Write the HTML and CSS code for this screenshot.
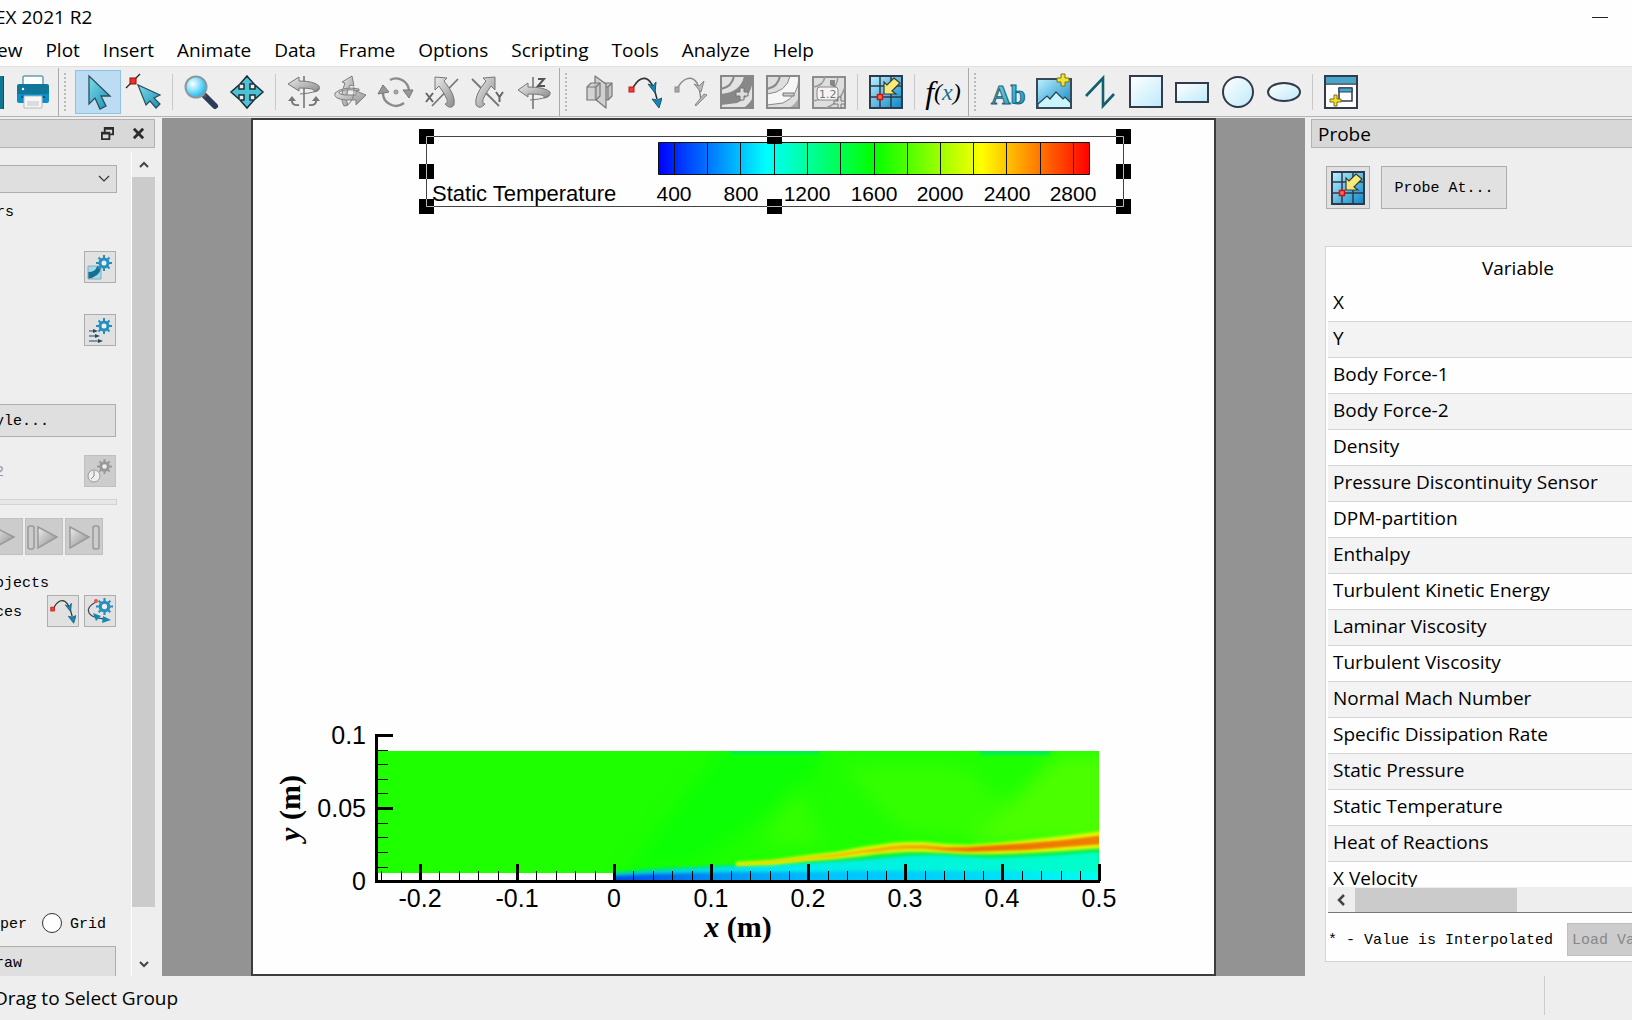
FILE: index.html
```html
<!DOCTYPE html>
<html lang="en">
<head>
    <meta charset="UTF-8">
    <meta name="viewport" content="width=device-width, initial-scale=1.0">
    <title>EX 2021 R2</title>
    <link rel="stylesheet" href="styles.css">
</head>
<body>

    <!-- shared gradients and icons -->
    <svg class="defs" width="0" height="0" aria-hidden="true">
        <defs>
            <linearGradient id="teal" x1="0" y1="0" x2="1" y2="1">
                <stop offset="0" stop-color="#7fdcea"/>
                <stop offset="1" stop-color="#1a8fb4"/>
            </linearGradient>
            <linearGradient id="cyan" x1="0" y1="0" x2="1" y2="1">
                <stop offset="0" stop-color="#bdf1ff"/>
                <stop offset="1" stop-color="#0a86c4"/>
            </linearGradient>
            <linearGradient id="pale" x1="0" y1="0" x2="1" y2="1">
                <stop offset="0" stop-color="#ffffff"/>
                <stop offset="1" stop-color="#bdeafa"/>
            </linearGradient>
            <linearGradient id="grey" x1="0" y1="0" x2="1" y2="1">
                <stop offset="0" stop-color="#ececec"/>
                <stop offset="1" stop-color="#8c8c8c"/>
            </linearGradient>
            <symbol id="probe" viewBox="0 0 34 34">
                <rect x="1" y="1" width="32" height="32" fill="url(#cyan)" stroke="#2b3a4c" stroke-width="2"/>
                <path d="M11 1v32M22 1v32M1 11h32M1 22h32" stroke="#2b3a4c" stroke-width="1.500"/>
                <rect x="8.500" y="19.500" width="5" height="5" fill="#ff6a50" stroke="#d01010" stroke-width="1.500"/>
                <path d="M25 3l6 5-8 8 4 3H15V7l3 3z" fill="#f6ea7a" stroke="#3a3a30" stroke-width="1.200"/>
            </symbol>
            <symbol id="stream" viewBox="0 0 34 34">
                <path d="M4 15C9 4 17 -1 23 8C25 11 27 16 29 24" fill="none" stroke="#333" stroke-width="1.600"/>
                <rect x="1" y="12" width="5" height="5" fill="#f04030" stroke="#c01818"/>
                <path d="M20 9l5 2 3-4-1 11zM24 24l5 1 5-2-3 10z" fill="#1688b0" stroke="#17587a"/>
            </symbol>
            <symbol id="gear" viewBox="0 0 16 16">
                <path d="M8 0v16M0 8h16M2.500 2.500l11 11M13.500 2.500l-11 11" stroke="currentColor" stroke-width="2"/>
                <circle cx="8" cy="8" r="4" fill="#eee" stroke="currentColor" stroke-width="3"/>
            </symbol>
        </defs>
    </svg>

    <header class="titlebar">
        <h1>EX 2021 R2</h1>
        <button class="minimize" aria-label="Minimize"></button>
    </header>

    <nav class="menu">
        <button>ew</button>
        <button>Plot</button>
        <button>Insert</button>
        <button>Animate</button>
        <button>Data</button>
        <button>Frame</button>
        <button>Options</button>
        <button>Scripting</button>
        <button>Tools</button>
        <button>Analyze</button>
        <button>Help</button>
    </nav>

    <div class="toolbars">
        <div class="toolbar first">
            <span class="cut-icon"></span>
            <button aria-label="Print">
                <svg viewBox="0 0 34 34">
                    <path d="M7 2q0-1 1-1h18q1 0 1 1v10H7z" fill="#fff" stroke="#19708f"/>
                    <path d="M3 9h28q2 0 2 2v11H1V11q0-2 2-2z" fill="#10769c"/>
                    <path d="M1 19h32v7q0 2-2 2H3q-2 0-2-2z" fill="#0a8fca"/>
                    <path d="M5 22h24" stroke="#0c5878" stroke-width="2"/>
                    <path d="M8 21h18v12H8z" fill="#f6f6f6" stroke="#b9b9b9"/>
                    <path d="M11 26h12v5H11z" fill="#dcdcdc"/>
                    <circle cx="7" cy="14" r="1.200" fill="#fff"/>
                </svg>
            </button>
        </div>

        <div class="toolbar">
            <span class="grip"></span>
            <button class="active" aria-label="Select">
                <svg viewBox="0 0 34 34"><path d="M8 1v28l6-6 5 11 6-3-5-10h9z" fill="url(#teal)" stroke="#27505c" stroke-width="1.300"/></svg>
            </button>
            <button aria-label="Adjust">
                <svg viewBox="0 0 34 34">
                    <path d="M-1 13L13 -1" stroke="#222" stroke-width="1.200"/>
                    <rect x="3" y="3" width="6" height="6" fill="#f03020" stroke="#901010"/>
                    <path d="M11 10l8 20 4-4 6 7 4-4-6-6 6-3z" fill="url(#teal)" stroke="#27505c" stroke-width="1.200"/>
                </svg>
            </button>
            <span class="sep"></span>
            <button aria-label="Zoom">
                <svg viewBox="0 0 34 34">
                    <path d="M21 21l10 10" stroke="#2d3b58" stroke-width="6" stroke-linecap="round"/>
                    <path d="M18 18l4 4" stroke="#555" stroke-width="3"/>
                    <circle cx="12" cy="12" r="10.500" fill="url(#zoomlens)" stroke="#8b9aa0" stroke-width="2"/>
                    <defs><radialGradient id="zoomlens" cx=".35" cy=".35" r=".7"><stop offset="0" stop-color="#fff"/><stop offset=".45" stop-color="#8fe2fa"/><stop offset="1" stop-color="#13b3ea"/></radialGradient></defs>
                </svg>
            </button>
            <button aria-label="Translate">
                <svg viewBox="0 0 34 34"><path d="M17 1l7 8h-4v5h5v-4l8 7-8 7v-4h-5v5h4l-7 8-7-8h4v-5H9v4l-8-7 8-7v4h5V9h-4z" fill="#4cc3d4" stroke="#1d3038" stroke-width="1.500"/></svg>
            </button>
            <span class="sep"></span>
            <button disabled aria-label="Rotate spherical">
                <svg viewBox="0 0 34 34">
                    <path d="M17 1v32" stroke="#777" stroke-width="1.600"/>
                    <path d="M1 9l11-7v4q15 0 20 5q2 5-5 6q3-4-15-4v3z" fill="url(#grey)" stroke="#777"/>
                    <path d="M32 13q-2 5-19 6" fill="none" stroke="#777"/>
                    <path d="M12 30q-8 1-7-6M22 30q8 1 7-6" fill="none" stroke="#777" stroke-width="2"/>
                    <path d="M1 26l4-5 4 5zM25 26l4-5 4 5z" fill="#777"/>
                </svg>
            </button>
            <button disabled aria-label="Rotate rollerball">
                <svg viewBox="0 0 34 34" stroke="#808080" stroke-linejoin="round">
                    <path d="M11 31q-5-8 1-23l-3-1 10-6 2 10-4-1q-6 13-2 20z" fill="url(#grey)"/>
                    <path d="M26 14Q10 11 2 18q-2 6 11 7h10v5l10-10-10-4v4H12q-7-1-6-3 6-4 20-1z" fill="url(#grey)"/>
                    <path d="M21 12q1 14-8 19" fill="none"/>
                </svg>
            </button>
            <button disabled aria-label="Rotate twist">
                <svg viewBox="0 0 34 34">
                    <path d="M4 17A13 13 0 0 0 25 28M11 5A13 13 0 0 1 30 16" fill="none" stroke="#8a8a8a" stroke-width="2.400"/>
                    <path d="M-1 19l5-9 6 7zM24 15l10 0-4 8z" fill="#999" stroke="#777"/>
                    <circle cx="17" cy="17" r="2" fill="#aaa" stroke="#888"/>
                </svg>
            </button>
            <button disabled aria-label="Rotate about X">
                <svg viewBox="0 0 34 34">
                    <path d="M7 31L33 4" stroke="#777" stroke-width="1.800"/>
                    <path d="M10 2l12 1-3 3q12 14 10 24q-4 5-9-1q7 0-6-18l-4 4z" fill="url(#grey)" stroke="#777"/>
                    <path d="M1 18l7 9M8 18l-7 9" stroke="#666" stroke-width="2"/>
                </svg>
            </button>
            <button disabled aria-label="Rotate about Y">
                <svg viewBox="0 0 34 34">
                    <path d="M1 4l27 27" stroke="#777" stroke-width="1.800"/>
                    <path d="M24 2l-12 1 3 3Q3 20 5 30q4 5 9-1q-7 0 6-18l4 4z" fill="url(#grey)" stroke="#777"/>
                    <path d="M25 17l3.500 5 3.500-5M28.500 22v5" fill="none" stroke="#666" stroke-width="2"/>
                </svg>
            </button>
            <button disabled aria-label="Rotate about Z">
                <svg viewBox="0 0 34 34">
                    <path d="M16 2v32" stroke="#777" stroke-width="1.600"/>
                    <path d="M1 15l10-7v4q17 0 22 5q1 5-6 6q3-4-16-4v3z" fill="url(#grey)" stroke="#777"/>
                    <path d="M32 20q-3 4-19 5" fill="none" stroke="#777"/>
                    <path d="M21 4h6l-6 7h7" fill="none" stroke="#555" stroke-width="2"/>
                </svg>
            </button>
        </div>

        <div class="toolbar">
            <span class="grip"></span>
            <button disabled aria-label="Slice">
                <svg viewBox="0 0 34 34" fill="#c8c8c8" stroke="#777" stroke-width="1.200" stroke-linejoin="round">
                    <path d="M17 12l4-4h9v13l-4 4h-9z"/><path d="M17 12h9v13M26 12l4-4" fill="none"/>
                    <path d="M13 1l11 8v24l-11-9z" fill="#d0d0d0"/>
                    <path d="M5 12l4-4h9v13l-4 4H5z" fill-opacity=".7"/><path d="M5 12h9v13M14 12l4-4" fill="none"/>
                </svg>
            </button>
            <button aria-label="Streamtrace"><svg><use href="#stream"/></svg></button>
            <button disabled aria-label="Streamtrace termination line">
                <svg viewBox="0 0 34 34">
                    <path d="M3 14C8 4 17-1 23 8q3 6 4 18" fill="none" stroke="#8a8a8a" stroke-width="1.500"/>
                    <rect x="1" y="12" width="4" height="5" fill="#aaa" stroke="#888"/>
                    <path d="M20 9l5 2 5-5-3 11zM22 31l11-11-3-1-9 11z" fill="#bbb" stroke="#888"/>
                </svg>
            </button>
            <button disabled aria-label="Add contour level">
                <svg viewBox="0 0 34 34">
                    <path d="M1 1h32v32H1z" fill="#e2e2e2"/>
                    <path d="M24 1h9q0 20-16 27L1 30V19Q21 17 24 1zM33 22v11H23q7-4 10-11z" fill="#888"/>
                    <path d="M1 1h32v32H1zM14 1Q12 12 1 14" fill="none" stroke="#888" stroke-width="2"/>
                    <path d="M20 13h4v4h4v4h-4v4h-4v-4h-4v-4h4z" fill="#ddd" stroke="#777"/>
                </svg>
            </button>
            <button disabled aria-label="Delete contour level">
                <svg viewBox="0 0 34 34">
                    <path d="M1 1h32v32H1z" fill="#dedede"/>
                    <path d="M24 1h9q0 20-16 27L1 30V19Q21 17 24 1z" fill="#f6f6f6" stroke="#888"/>
                    <path d="M33 22v11H23q7-4 10-11z" fill="#aaa"/>
                    <path d="M1 1h32v32H1zM14 1Q12 12 1 14" fill="none" stroke="#888" stroke-width="2"/>
                    <path d="M17 18h11v3H17z" fill="#ccc" stroke="#777"/>
                </svg>
            </button>
            <button disabled aria-label="Add contour label">
                <svg viewBox="0 0 34 34">
                    <path d="M1 2h32v31H1z" fill="#dedede" stroke="#8c8c8c" stroke-width="2"/>
                    <path d="M13 2Q11 11 1 12M26 2Q23 23 1 26M33 12Q28 28 14 33" fill="none" stroke="#999" stroke-width="1.500"/>
                    <path d="M18 5h5v8l-5-3z" fill="#888"/>
                    <rect x="5" y="12" width="21" height="13" rx="3" fill="#f4f4f4" stroke="#888"/>
                    <path d="M26 22h3v4h4v3h-4v4h-3v-4h-4v-3h4z" fill="#ddd" stroke="#777"/>
                    <text x="7" y="23" class="icon-number">1.2</text>
                </svg>
            </button>
            <span class="sep"></span>
            <button aria-label="Probe"><svg><use href="#probe"/></svg></button>
            <span class="sep"></span>
            <button class="fx" aria-label="Specify equations">f<span>(<b>x</b>)</span></button>
        </div>

        <div class="toolbar last">
            <span class="grip"></span>
            <button aria-label="Text">
                <svg viewBox="0 0 34 34"><text x="0" y="29" class="icon-ab" fill="url(#teal)">Ab</text></svg>
            </button>
            <button aria-label="Image">
                <svg viewBox="0 0 34 34">
                    <path d="M0 4h34v29H0z" fill="url(#cyan)"/>
                    <path d="M1 29l9-8 3 3 6-7 7 7 2-2 6 6v5H1z" fill="#c8f4fd" stroke="#2b4454" stroke-width="1.200"/>
                    <path d="M0 4h34v29H0z" fill="none" stroke="#36495a" stroke-width="2"/>
                    <path d="M24 -1h4v4h4v4h-4v4h-4V7h-4V3h4z" fill="#f4e230" stroke="#77701c"/>
                </svg>
            </button>
            <button aria-label="Polyline">
                <svg viewBox="0 0 34 34"><path d="M3 21L20 3v28l11-12" fill="none" stroke="#12606e" stroke-width="2.600"/></svg>
            </button>
            <button aria-label="Square">
                <svg viewBox="0 0 34 34"><path d="M1 1h32v31H1z" fill="url(#pale)" stroke="#333a4c" stroke-width="2"/></svg>
            </button>
            <button aria-label="Rectangle">
                <svg viewBox="0 0 34 34"><path d="M1 8h32v19H1z" fill="url(#pale)" stroke="#333a4c" stroke-width="2"/></svg>
            </button>
            <button aria-label="Circle">
                <svg viewBox="0 0 34 34"><circle cx="17" cy="17" r="15" fill="url(#pale)" stroke="#333a4c" stroke-width="2"/></svg>
            </button>
            <button aria-label="Ellipse">
                <svg viewBox="0 0 34 34"><ellipse cx="17" cy="17" rx="16" ry="9" fill="url(#pale)" stroke="#333a4c" stroke-width="2"/></svg>
            </button>
            <span class="sep"></span>
            <button aria-label="Create frame">
                <svg viewBox="0 0 34 34">
                    <path d="M1 1h32v32H1z" fill="#fff" stroke="#333a4c" stroke-width="2"/>
                    <path d="M2 2h30v6H2z" fill="#43a8cc"/><path d="M1 9h32" stroke="#333a4c" stroke-width="1.500"/>
                    <path d="M15 13h13v13H15z" fill="#fff" stroke="#333a4c" stroke-width="1.500"/>
                    <path d="M15 13h13v4H15z" fill="#43a8cc" stroke="#333a4c"/>
                    <path d="M10 20h3v4h4v3h-4v4h-3v-4H6v-3h4z" fill="#f4e230" stroke="#77701c"/>
                </svg>
            </button>
        </div>
    </div>

    <main>
        <aside class="sidebar">
            <div class="dock-title">
                <button aria-label="Float">
                    <svg viewBox="0 0 14 14"><path d="M4 5V1h9v7H9M4 2h9M1 6h8v7H1zM1 7h8" fill="none" stroke="#2c2c2c" stroke-width="2"/></svg>
                </button>
                <button aria-label="Close">
                    <svg viewBox="0 0 14 14"><path d="M2 2l10 10M12 2L2 12" stroke="#2c2c2c" stroke-width="3"/></svg>
                </button>
            </div>
            <div class="sidebar-body">
                <div class="options">
                    <div class="combo">
                        <select aria-label="Plot type"><option></option></select>
                        <svg viewBox="0 0 12 8"><path d="M1 1l5 5 5-5" fill="none" stroke="#333" stroke-width="1.200"/></svg>
                    </div>
                    <p class="layers">rs</p>
                    <button class="small contour" aria-label="Contour details">
                        <svg viewBox="0 0 26 26">
                            <path d="M1 12h13v13H1z" fill="#9edcea"/>
                            <path d="M1 25v-7q8 0 9-6h4q0 6-4 9t-9 4z" fill="#146f92"/>
                            <path d="M1 12h13v13H1z" fill="none" stroke="#8ab"/>
                            <use href="#gear" x="9" y="1" width="16" height="16" color="#2590bd"/>
                        </svg>
                    </button>
                    <button class="small vector" aria-label="Vector details">
                        <svg viewBox="0 0 26 26">
                            <path d="M2 14h6M2 19h8M2 24h10" stroke="#234d5c" stroke-width="1.200"/>
                            <path d="M6 12l5 2-5 2zM8 17l5 2-5 2zM11 22l5 2-5 2z" fill="#234d5c"/>
                            <use href="#gear" x="9" y="1" width="16" height="16" color="#2590bd"/>
                        </svg>
                    </button>
                    <button class="wide style">yle...</button>
                    <div class="row time">
                        <span>2</span>
                        <button class="small" disabled aria-label="Time details">
                            <svg viewBox="0 0 26 26">
                                <use href="#gear" x="10" y="1" width="15" height="15" color="#999"/>
                                <circle cx="7" cy="18" r="6" fill="#eee" stroke="#999"/>
                                <path d="M7 13v5l-3 3" fill="none" stroke="#888"/>
                            </svg>
                        </button>
                    </div>
                    <input class="slider" type="range" disabled aria-label="Time">
                    <div class="player">
                        <button disabled aria-label="Play"><svg viewBox="0 0 36 36"><path d="M8 8l20 10L8 29z" fill="url(#grey)" stroke="#999" stroke-width="1.500"/></svg></button>
                        <button disabled aria-label="Step forward"><svg viewBox="0 0 36 36"><rect x="2" y="7" width="6" height="23" rx="2" fill="none" stroke="#999" stroke-width="1.500"/><path d="M12 8l19 10-19 11z" fill="url(#grey)" stroke="#999" stroke-width="1.500"/></svg></button>
                        <button disabled aria-label="Go to end"><svg viewBox="0 0 36 36"><path d="M4 8l19 10L4 29z" fill="url(#grey)" stroke="#999" stroke-width="1.500"/><rect x="27" y="7" width="6" height="23" rx="2" fill="none" stroke="#999" stroke-width="1.500"/></svg></button>
                    </div>
                    <p class="derived">bjects</p>
                    <div class="row">
                        <span>ces</span>
                        <button class="small" aria-label="Place streamtrace"><svg><use href="#stream"/></svg></button>
                        <button class="small" aria-label="Streamtrace details">
                            <svg viewBox="0 0 26 26">
                                <path d="M9 4Q-1 9 2 15q3 5 16 6" fill="none" stroke="#445" stroke-width="1.300"/>
                                <path d="M6 15l8 3-5 5zM16 18l8 4-9 3z" fill="#1688b0"/>
                                <circle cx="9" cy="3" r="2" fill="#f05050"/>
                                <use href="#gear" x="9" y="0" width="17" height="17" color="#2590bd"/>
                            </svg>
                        </button>
                    </div>
                    <div class="snap">
                        <span>per</span>
                        <input type="radio" id="grid" name="snap">
                        <label for="grid">Grid</label>
                    </div>
                    <button class="wide redraw">raw</button>
                </div>
                <div class="scrollbar">
                    <svg viewBox="0 0 12 8"><path d="M2 6l4-4 4 4" fill="none" stroke="#444" stroke-width="2"/></svg>
                    <div class="thumb"></div>
                    <svg viewBox="0 0 12 8"><path d="M2 2l4 4 4-4" fill="none" stroke="#444" stroke-width="2"/></svg>
                </div>
            </div>
        </aside>

        <section class="workspace">
            <svg class="plot" viewBox="253 120 961 854">
                <defs>
                    <linearGradient id="legend">
                        <stop offset="0" stop-color="#0000ff"/>
                        <stop offset=".25" stop-color="#00ffff"/>
                        <stop offset=".5" stop-color="#00ff00"/>
                        <stop offset=".75" stop-color="#ffff00"/>
                        <stop offset="1" stop-color="#ff0000"/>
                    </linearGradient>
                    <linearGradient id="fuel">
                        <stop offset="0" stop-color="#0048f0"/>
                        <stop offset=".1" stop-color="#0068f4"/>
                        <stop offset=".22" stop-color="#0094f6"/>
                        <stop offset=".45" stop-color="#00c4ff"/>
                        <stop offset=".7" stop-color="#00d4f8"/>
                        <stop offset="1" stop-color="#00fff0"/>
                    </linearGradient>
                    <linearGradient id="mix">
                        <stop offset="0" stop-color="#00c8c8"/>
                        <stop offset=".3" stop-color="#00e8f0"/>
                        <stop offset="1" stop-color="#00ffc8"/>
                    </linearGradient>
                    <linearGradient id="flame">
                        <stop offset="0" stop-color="#e8d800"/>
                        <stop offset=".5" stop-color="#f0a800"/>
                        <stop offset=".65" stop-color="#ee7000"/>
                        <stop offset="1" stop-color="#f08000"/>
                    </linearGradient>
                    <filter id="soft" x="-20%" y="-20%" width="140%" height="140%" color-interpolation-filters="sRGB"><feGaussianBlur stdDeviation="9"/></filter>
                    <filter id="edge" x="-5%" y="-50%" width="110%" height="200%" color-interpolation-filters="sRGB"><feGaussianBlur stdDeviation="1.500"/></filter>
                    <filter id="core" x="-5%" y="-50%" width="110%" height="200%" color-interpolation-filters="sRGB"><feGaussianBlur stdDeviation=".8"/></filter>
                    <clipPath id="domain"><path d="M376 751H1099V881H614V873H376z"/></clipPath>
                </defs>

                <!-- temperature field -->
                <g clip-path="url(#domain)">
                    <path d="M376 751H1099V881H376z" fill="#1eff00"/>
                    <g filter="url(#soft)">
                        <path d="M620 880L725 745H830L800 790L700 860z" fill="#0cff04"/>
                        <path d="M840 765h120l60 50-40 25-80-10zM760 845l35-60 30 60z" fill="#34ff00"/>
                        <path d="M968 845l90-90h50v85z" fill="#4cff00"/>
                    </g>
                    <path d="M730 744h90v10H730zM980 744h70v11h-70z" fill="#00f050" filter="url(#edge)"/>
                    <path d="M614 872L655 868L737 864L808 860L863 855L907 851L940 851L990 853L1044 850L1099 846V890H614z" fill="#00f050" filter="url(#edge)"/>
                    <path d="M614 873L655 870L737 866L808 863L863 860L907 856L940 855L990 858L1044 856L1099 852V890H614z" fill="url(#mix)" filter="url(#edge)"/>
                    <path d="M614 876L655 874L737 872L808 872L863 871L940 871L990 871L1099 872V890H614z" fill="url(#fuel)" filter="url(#edge)"/>
                    <path d="M736 862L772 860L809 855L836 852L863 847L877 845L891 843L907 842L924 842L946 844L968 845L998 843L1028 840L1064 836L1105 831V848L1064 851L1028 853L998 854L968 854L946 853L924 852L907 852L891 853L877 854L863 856L836 859L809 861L772 865L736 866z" fill="#e8f800" filter="url(#edge)"/>
                    <path d="M736 864L772 861L809 857L836 854L863 850L877 848L891 846L907 845L924 845L946 847L968 847L998 845L1028 843L1064 840L1105 835V844L1064 847L1028 850L998 851L968 852L946 851L924 849L907 849L891 850L877 852L863 853L836 857L809 859L772 863L736 865z" fill="url(#flame)" filter="url(#core)"/>
                </g>

                <!-- axes -->
                <g stroke="#000" fill="none">
                    <path d="M376.500 734V883M375 881.500H1100" stroke-width="3"/>
                    <path d="M376 735.500H393M376 808.500H393M420.500 864V881M517.500 864V881M614.500 864V881M711.500 864V881M808.500 864V881M905.500 864V881M1002.500 864V881M1099.500 864V881" stroke-width="3"/>
                    <path d="M376 750.500h12M376 764.500h12M376 779.500h12M376 793.500h12M376 823.500h12M376 837.500h12M376 852.500h12M376 867.500h12"/>
                    <path d="M381.500 871v10M401.500 871v10M439.500 871v10M459.500 871v10M478.500 871v10M498.500 871v10M536.500 871v10M556.500 871v10M575.500 871v10M595.500 871v10M633.500 871v10M653.500 871v10M672.500 871v10M692.500 871v10M731.500 871v10M750.500 871v10M770.500 871v10M789.500 871v10M828.500 871v10M847.500 871v10M867.500 871v10M886.500 871v10M925.500 871v10M944.500 871v10M964.500 871v10M983.500 871v10M1022.500 871v10M1041.500 871v10M1061.500 871v10M1080.500 871v10"/>
                </g>
                <g class="tick-label middle">
                    <text x="420" y="907">-0.2</text>
                    <text x="517" y="907">-0.1</text>
                    <text x="614" y="907">0</text>
                    <text x="711" y="907">0.1</text>
                    <text x="808" y="907">0.2</text>
                    <text x="905" y="907">0.3</text>
                    <text x="1002" y="907">0.4</text>
                    <text x="1099" y="907">0.5</text>
                </g>
                <g class="tick-label end">
                    <text x="366" y="744">0.1</text>
                    <text x="366" y="817">0.05</text>
                    <text x="366" y="890">0</text>
                </g>
                <text class="axis-title" x="738" y="937"><tspan class="var">x</tspan> (m)</text>
                <text class="axis-title" transform="translate(300 808) rotate(-90)"><tspan class="var">y</tspan> (m)</text>

                <!-- legend -->
                <path d="M658.500 142.500H1089.500V174.500H658.500z" fill="url(#legend)" stroke="#111"/>
                <path d="M674.500 143v31M707.500 143v31M740.500 143v31M774.500 143v31M807.500 143v31M840.500 143v31M874.500 143v31M907.500 143v31M940.500 143v31M973.500 143v31M1006.500 143v31M1040.500 143v31M1073.500 143v31" stroke="#111"/>
                <g class="legend-label">
                    <text class="legend-title" x="432" y="201">Static Temperature</text>
                    <g class="middle">
                        <text x="674" y="201">400</text>
                        <text x="741" y="201">800</text>
                        <text x="807" y="201">1200</text>
                        <text x="874" y="201">1600</text>
                        <text x="940" y="201">2000</text>
                        <text x="1007" y="201">2400</text>
                        <text x="1073" y="201">2800</text>
                    </g>
                </g>

                <!-- selection -->
                <path d="M419 129h15v15h-15zM767 129h15v15h-15zM1116 129h15v15h-15zM419 164h15v15h-15zM1116 164h15v15h-15zM419 199h15v15h-15zM767 199h15v15h-15zM1116 199h15v15h-15z"/>
                <path d="M426.500 136.500H1123.500V206.500H426.500z" fill="none" stroke="#444"/>
                <path d="M434 136.500h-7.500V144M426.500 164v15M426.500 199v7.500h7.500M767 136.500h15M767 206.500h15M1116 136.500h7.500V144M1123.500 164v15M1123.500 199v7.500H1116" fill="none" stroke="#bbb"/>
            </svg>
        </section>

        <aside class="probe">
            <h2 class="dock-title">Probe</h2>
            <div class="probe-actions">
                <button class="probe-tool" aria-label="Probe tool"><svg><use href="#probe"/></svg></button>
                <button class="probe-at">Probe At...</button>
            </div>
            <div class="probe-box">
                <div class="table-view">
                    <table>
                        <thead><tr><th>Variable</th></tr></thead>
                        <tbody>
                            <tr><td>X</td></tr>
                            <tr><td>Y</td></tr>
                            <tr><td>Body Force-1</td></tr>
                            <tr><td>Body Force-2</td></tr>
                            <tr><td>Density</td></tr>
                            <tr><td>Pressure Discontinuity Sensor</td></tr>
                            <tr><td>DPM-partition</td></tr>
                            <tr><td>Enthalpy</td></tr>
                            <tr><td>Turbulent Kinetic Energy</td></tr>
                            <tr><td>Laminar Viscosity</td></tr>
                            <tr><td>Turbulent Viscosity</td></tr>
                            <tr><td>Normal Mach Number</td></tr>
                            <tr><td>Specific Dissipation Rate</td></tr>
                            <tr><td>Static Pressure</td></tr>
                            <tr><td>Static Temperature</td></tr>
                            <tr><td>Heat of Reactions</td></tr>
                            <tr><td>X Velocity</td></tr>
                        </tbody>
                    </table>
                </div>
                <div class="hscroll">
                    <svg viewBox="0 0 10 12"><path d="M8 1L3 6l5 5" fill="none" stroke="#444" stroke-width="2.500"/></svg>
                    <div class="thumb"></div>
                </div>
                <div class="probe-footer">
                    <span>* - Value is Interpolated</span>
                    <button disabled>Load Values</button>
                </div>
            </div>
        </aside>
    </main>

    <footer class="status">
        <span>Drag to Select Group</span>
        <span class="status-end"></span>
    </footer>
</body>
</html>
```
FILE: styles.css
```css
* {
    box-sizing: border-box;
}

body {
    margin: 0;
    height: 100vh;
    display: flex;
    flex-direction: column;
    overflow: hidden;
    background: #eee;
    color: #000;
    font-family: "Open Sans", "Noto Sans", sans-serif;
    font-size: 19px;
}

h1, h2, p {
    margin: 0;
    font-size: inherit;
    font-weight: normal;
}

button {
    flex-shrink: 0;
    padding: 0;
    border: 0;
    background: none;
    color: inherit;
    font: inherit;
}

svg {
    display: block;
    overflow: visible;
}

.defs {
    position: absolute;
}

/* title and menu */

.titlebar {
    display: flex;
    justify-content: space-between;
    align-items: center;
    height: 34px;
    padding-right: 24px;
    background: #fefefe;

    h1 {
        margin-left: -5px;
    }
}

.minimize {
    width: 16px;
    height: 16px;

    &::before {
        content: "";
        display: block;
        height: 1px;
        background: #222;
    }
}

.menu {
    display: flex;
    gap: 23px;
    height: 32px;
    padding-right: 4px;
    background: #fefefe;

    button:first-child {
        margin-left: -3px;
    }
}

/* toolbars */

.toolbars {
    display: flex;
    height: 51px;
    padding-top: 1px;
    border-top: 1px solid #e0e0e0;
    border-bottom: 1px solid #b4b4b4;
}

.toolbar {
    display: flex;
    align-items: center;
    padding-right: 2px;
    border-right: 1px solid #aaa;

    button {
        display: grid;
        place-items: center;
        width: 46px;
        height: 44px;
    }

    svg {
        width: 34px;
        height: 34px;
    }

    .active {
        background: #bcdcf4;
        border: 1px solid #90c0e6;
    }

    &.last {
        flex: 1;
        border-right: 0;
    }
}

.cut-icon {
    width: 4px;
    height: 33px;
    margin-right: 6px;
    background: #0f7791;
    border-right: 1px solid #184c5c;
}

.grip {
    height: 38px;
    margin: 0 9px 0 5px;
    border-left: 2px dotted #bbb;
}

.sep {
    width: 1px;
    height: 36px;
    margin: 0 5px;
    background: #c8c8c8;
}

.icon-number {
    font: 11px "DejaVu Sans", sans-serif;
    fill: #777;
}

.icon-ab {
    font: bold 27px "Liberation Serif", serif;
    stroke: #1c6478;
    stroke-width: 1px;
}

.toolbar .fx {
    display: flex;
    justify-content: center;
    align-items: center;
    font: italic 32px "Liberation Serif", serif;

    span {
        font-size: 24px;
    }

    b {
        color: #17708e;
        font-weight: normal;
    }
}

/* docks */

main {
    flex: 1;
    min-height: 0;
    display: flex;
    padding-top: 1px;
}

.dock-title {
    display: flex;
    align-items: center;
    height: 29px;
    margin-top: 1px;
    background: #d8d8d8;
    border: 1px solid #b2b2b2;
}

.sidebar {
    display: flex;
    flex-direction: column;
    width: 155px;
    margin-right: 7px;
    font-family: "Liberation Mono", monospace;
    font-size: 15px;

    .dock-title {
        justify-content: flex-end;
        gap: 18px;
        padding-right: 9px;
        border-left: 0;
    }

    .dock-title svg {
        width: 13px;
        height: 13px;
    }
}

.sidebar-body {
    flex: 1;
    min-height: 0;
    display: flex;
    justify-content: space-between;
}

.options {
    display: flex;
    flex-direction: column;
    width: 117px;
    padding-top: 17px;
    overflow: hidden;

    > * {
        flex-shrink: 0;
    }

    p {
        line-height: 26px;
    }
}

.combo {
    position: relative;

    select {
        display: block;
        width: 100%;
        height: 28px;
        appearance: none;
        background: #dfdfdf;
        border: 1px solid #adadad;
        border-left: 0;
        border-radius: 0;
    }

    svg {
        position: absolute;
        right: 7px;
        top: 10px;
        width: 12px;
        height: 8px;
    }
}

.layers {
    margin-top: 7px;
    margin-left: -4px;
}

.small {
    display: grid;
    place-items: center;
    align-self: flex-end;
    width: 32px;
    height: 32px;
    margin-right: 1px;
    background: #e1e1e1;
    border: 1px solid #adadad;

    svg {
        width: 26px;
        height: 26px;
    }

    &:disabled {
        background: #ccc;
        border-color: #c0c0c0;
    }
}

.contour {
    margin-top: 25px;
}

.vector {
    margin-top: 31px;
}

.wide {
    height: 33px;
    margin-right: 1px;
    padding-top: 2px;
    text-align: left;
    text-indent: -5px;
    background: #dfdfdf;
    border: 1px solid #adadad;
    border-left: 0;
}

.style {
    margin-top: 58px;
}

.row {
    display: flex;
    align-items: center;
    gap: 4px;

    span {
        flex: 1;
        margin-left: -5px;
        padding-top: 2px;
    }
}

.time {
    margin-top: 18px;
    color: #999;
}

.slider {
    width: 100%;
    height: 6px;
    margin: 12px 0 0;
    appearance: none;
    background: #e7e7e7;
    border: 1px solid #d2d2d2;
    border-left: 0;

    &::-webkit-slider-thumb {
        appearance: none;
        width: 0;
    }
}

.player {
    display: flex;
    gap: 2px;
    margin-top: 13px;
    margin-left: -15px;

    button {
        width: 38px;
        height: 37px;
        background: #ccc;
        border: 1px solid #c0c0c0;
    }
}

.derived {
    margin-top: 16px;
    margin-left: -5px;
}

.derived + .row {
    margin-top: -2px;
}

.snap {
    display: flex;
    align-items: center;
    height: 24px;
    margin-top: auto;

    span, label {
        padding-top: 2px;
    }

    input {
        appearance: none;
        width: 20px;
        height: 20px;
        margin: 0 8px 0 15px;
        background: #fff;
        border: 1px solid #333;
        border-radius: 50%;
    }
}

.redraw {
    margin-top: 11px;
    margin-bottom: -3px;
}

.scrollbar {
    display: flex;
    flex-direction: column;
    align-items: center;
    width: 24px;
    margin-top: 4px;
    border-left: 1px solid #fff;

    svg {
        flex-shrink: 0;
        width: 12px;
        height: 8px;
        margin: 9px 0 8px;
    }

    .thumb {
        width: 100%;
        flex: 1;
        margin-bottom: 44px;
        background: #cbcbcb;
    }
}

/* plot */

.workspace {
    flex: 1;
    min-width: 0;
    display: flex;
    padding: 0 89px;
    background: #939393;
}

.plot {
    flex: 1;
    min-width: 0;
    background: #fefefe;
    border: 2px solid #3c3c3c;
    font-family: "Liberation Sans", Arial, sans-serif;
}

.tick-label {
    font-size: 25px;
}

.legend-label {
    font-size: 21px;
}

.legend-title {
    font-size: 22px;
}

.middle, .axis-title {
    text-anchor: middle;
}

.end {
    text-anchor: end;
}

.axis-title {
    font: bold 30px "Liberation Serif", serif;
}

.var {
    font-style: italic;
}

/* probe dock */

.probe {
    display: flex;
    flex-direction: column;
    width: 321px;
    margin-left: 6px;
    padding-bottom: 14px;
    overflow: hidden;

    .dock-title {
        flex-shrink: 0;
        padding-left: 6px;
        border-right: 0;
    }
}

.probe-actions {
    display: flex;
    gap: 11px;
    padding: 18px 0 37px 15px;
    font-family: "Liberation Mono", monospace;
    font-size: 15px;

    button {
        height: 43px;
        background: #e1e1e1;
        border: 1px solid #adadad;
    }

    svg {
        width: 34px;
        height: 34px;
    }
}

.probe-tool {
    display: grid;
    place-items: center;
    width: 44px;
}

.probe-actions .probe-at {
    width: 126px;
    padding-top: 2px;
}

.probe-box {
    flex: 1;
    min-height: 0;
    display: flex;
    flex-direction: column;
    margin-left: 14px;
    padding-left: 2px;
    background: #fefefe;
    border: 1px solid #d4d4d4;
    border-right: 0;
}

.table-view {
    flex: 1;
    min-height: 0;
    overflow: hidden;
}

table {
    width: 380px;
    border-collapse: collapse;
}

th {
    height: 38px;
    padding: 3px 0 0;
    font-weight: normal;
}

td {
    height: 36px;
    padding: 0 5px 2px;
    border-bottom: 1px solid #d4d4d4;
}

tbody tr:nth-child(even) {
    background: #f3f3f3;
}

.hscroll {
    display: flex;
    align-items: center;
    height: 26px;
    background: #eee;
    border-bottom: 1px solid #777;

    svg {
        width: 10px;
        height: 12px;
        margin: 0 9px 0 8px;
    }

    .thumb {
        width: 162px;
        height: 24px;
        background: #cbcbcb;
    }
}

.probe-footer {
    display: flex;
    align-items: center;
    gap: 14px;
    height: 48px;
    padding-top: 5px;
    font-family: "Liberation Mono", monospace;
    font-size: 15px;
    white-space: nowrap;

    span {
        padding-top: 2px;
    }

    button {
        height: 33px;
        padding: 2px 4px 0;
        background: #ccc;
        border: 1px solid #bfbfbf;
        color: #888;
    }
}

/* status bar */

.status {
    display: flex;
    justify-content: space-between;
    align-items: center;
    height: 44px;

    > span:first-child {
        margin-left: -6px;
    }
}

.status-end {
    align-self: flex-start;
    width: 88px;
    height: 39px;
    border-left: 1px solid #ccc;
}
```
